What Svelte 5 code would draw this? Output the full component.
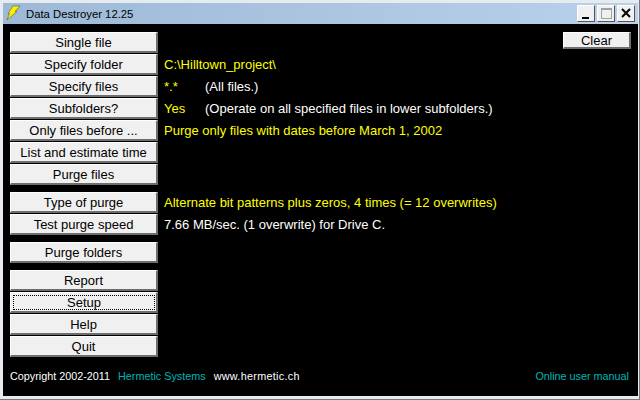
<script lang="ts">
  const groups = [
    [
      { label: 'Single file' },
      { label: 'Specify folder', value: 'C:\\Hilltown_project\\' },
      { label: 'Specify files', value: '*.*', note: '(All files.)' },
      { label: 'Subfolders?', value: 'Yes', note: '(Operate on all specified files in lower subfolders.)' },
      { label: 'Only files before ...', value: 'Purge only files with dates before March 1, 2002' },
      { label: 'List and estimate time' },
      { label: 'Purge files' }
    ],
    [
      { label: 'Type of purge', value: 'Alternate bit patterns plus zeros, 4 times (= 12 overwrites)' },
      { label: 'Test purge speed', plain: '7.66 MB/sec. (1 overwrite) for Drive C.' }
    ],
    [{ label: 'Purge folders' }],
    [{ label: 'Report' }, { label: 'Setup', focused: true }, { label: 'Help' }, { label: 'Quit' }]
  ];
</script>

<div class="window">
  <header class="titlebar">
    <svg class="logo" viewBox="0 0 16 16" width="16" height="16" aria-hidden="true">
      <path d="M8 1 L15 1 L10 6.5 L12 6.5 L2 15 L4.5 8.5 L3 8.5 Z" fill="#ffef00" stroke="#5a5a20" stroke-width="0.6" />
    </svg>
    <span class="title">Data Destroyer 12.25</span>
    <div class="controls">
      <button class="ctl" aria-label="Minimize"><svg viewBox="0 0 18 17" width="18" height="17"><rect x="5" y="12" width="7" height="2" fill="#000" /></svg></button>
      <button class="ctl" aria-label="Maximize"><svg viewBox="0 0 18 17" width="18" height="17"><rect x="4.5" y="3.5" width="10" height="10" fill="none" stroke="#a0a0a0" /><path d="M4 4.5h11" stroke="#a0a0a0" /></svg></button>
      <button class="ctl" aria-label="Close"><svg viewBox="0 0 18 17" width="18" height="17"><path d="M5 4 L13 12 M13 4 L5 12" stroke="#000" stroke-width="2" /></svg></button>
    </div>
  </header>

  <main class="body">
    <div class="top">
      <div class="groups">
        {#each groups as group}
          <div class="group">
            {#each group as row}
              <div class="row">
                <button class="btn" class:focused={row.focused}><span>{row.label}</span></button>
                {#if row.value}
                  <span class="value" class:wide={row.note}>{row.value}</span>
                {/if}
                {#if row.note}<span class="note">{row.note}</span>{/if}
                {#if row.plain}<span class="plain">{row.plain}</span>{/if}
              </div>
            {/each}
          </div>
        {/each}
      </div>
      <button class="btn clear">Clear</button>
    </div>
    <footer class="foot">
      <span class="copy">Copyright 2002-2011</span>
      <span class="teal">Hermetic Systems</span>
      <span class="copy www">www.hermetic.ch</span>
      <span class="teal manual">Online user manual</span>
    </footer>
  </main>
</div>

<style>
  :global(body) {
    margin: 0;
    background: #f0f0f0;
  }

  .window {
    width: 640px;
    height: 400px;
    box-sizing: border-box;
    padding: 3px 2px 4px 3px;
    background: #e6ebf0;
    box-shadow: inset -1px -1px 0 #777;
    display: flex;
    flex-direction: column;
    font-family: "Liberation Sans", Arial, sans-serif;
    font-size: 13px;
  }

  .titlebar {
    height: 21px;
    flex: none;
    display: flex;
    align-items: center;
    background: linear-gradient(90deg, #9db9d7, #b9d1ea);
    color: #000;
  }

  .logo {
    margin-left: 2px;
    margin-top: -2px;
  }

  .title {
    margin-left: 5px;
    font-size: 11.3px;
  }

  .controls {
    margin-left: auto;
    display: flex;
    gap: 2px;
    margin-right: 3px;
  }

  .ctl {
    width: 18px;
    height: 17px;
    padding: 0;
    border: 1px solid #fff;
    border-right-color: #555;
    border-bottom-color: #555;
    background: #f0f0f0;
    display: block;
    box-sizing: border-box;
    overflow: hidden;
  }

  .ctl svg {
    display: block;
    margin: -1px;
  }

  .body {
    flex: 1;
    background: #000;
    display: flex;
    flex-direction: column;
    padding: 8px 7px 0 7px;
    min-height: 0;
  }

  .top {
    display: flex;
    justify-content: space-between;
    align-items: flex-start;
  }

  .groups {
    display: flex;
    flex-direction: column;
    gap: 7px;
  }

  .group {
    display: flex;
    flex-direction: column;
    gap: 1px;
  }

  .row {
    display: flex;
    align-items: center;
    height: 21px;
    white-space: nowrap;
  }

  .btn {
    width: 148px;
    height: 21px;
    flex: none;
    padding: 0;
    box-sizing: border-box;
    background: #f0f0f0;
    border: 1px solid #fff;
    border-right: 2px solid #6e6e6e;
    border-bottom: 2px solid #6e6e6e;
    color: #000;
    font: inherit;
    text-align: center;
  }

  .btn.focused {
    padding: 1px;
  }

  .btn.focused span {
    display: block;
    border: 1px dotted #000;
    height: 13px;
    line-height: 13px;
    margin: 0 0 0 1px;
  }

  .clear {
    width: 68px;
    height: 17px;
    padding: 0;
    line-height: 13px;
  }

  .value {
    margin-left: 6px;
    color: #ffff00;
  }

  .value.wide {
    width: 41px;
  }

  .note,
  .plain,
  .copy {
    color: #fff;
  }

  .plain {
    margin-left: 6px;
  }

  .foot {
    margin-top: auto;
    height: 26px;
    display: flex;
    align-items: flex-start;
    box-sizing: border-box;
    font-size: 10.8px;
  }

  .teal {
    color: #00b4b4;
    margin-left: 8px;
  }

  .www {
    margin-left: 8px;
    letter-spacing: 0.3px;
  }

  .manual {
    margin-left: auto;
    margin-right: 2px;
  }
</style>
